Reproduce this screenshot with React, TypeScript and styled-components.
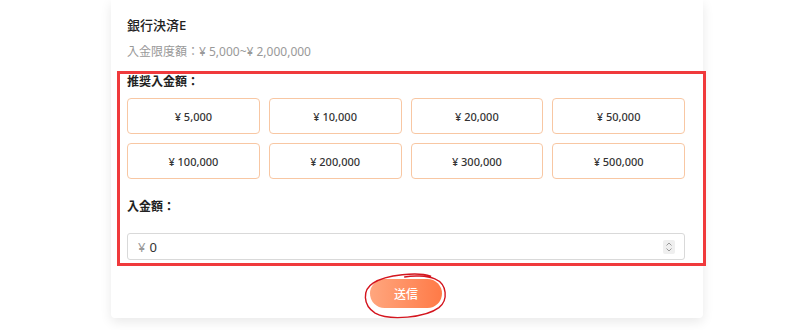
import React from "react";
import styled, { createGlobalStyle } from "styled-components";

const amounts = [5000, 10000, 20000, 50000, 100000, 200000, 300000, 500000];

const GlobalStyle = createGlobalStyle`
  html, body {
    margin: 0;
    padding: 0;
    background: #ffffff;
  }
  body {
    font-family: "Noto Sans", "Noto Sans CJK JP", sans-serif;
    color: #333;
  }
`;

const App: React.FC = () => {
  return (
    <>
      <GlobalStyle />
      <Page>
        <Card>
          <Title>銀行決済E</Title>
          <Limit>入金限度額：¥ 5,000~¥ 2,000,000</Limit>
          <Marked>
            <Label>推奨入金額：</Label>
            <Grid>
              {amounts.map((a) => (
                <AmountButton key={a}>¥ {a.toLocaleString("en-US")}</AmountButton>
              ))}
            </Grid>
            <InputLabel>入金額：</InputLabel>
            <InputBox>
              <Yen>¥</Yen>
              <Value>0</Value>
              <Spinner>
                <svg width="8" height="12" viewBox="0 0 8 12">
                  <path d="M1.5 4.5 L4 2 L6.5 4.5" fill="none" stroke="#999" strokeWidth="1" />
                  <path d="M1.5 7.5 L4 10 L6.5 7.5" fill="none" stroke="#999" strokeWidth="1" />
                </svg>
              </Spinner>
            </InputBox>
          </Marked>
          <Footer>
            <SubmitWrap>
              <Submit>送信</Submit>
              <Circle width="86" height="48" viewBox="0 0 86 48">
                <path
                  d="M70 6 C 58 1, 26 1, 12 9 C 1 15, 0 30, 12 39 C 26 48, 62 47, 76 38 C 86 31, 86 15, 74 9 C 66 5, 52 4, 44 5"
                  fill="none"
                  stroke="#d4161f"
                  strokeWidth="1.4"
                  strokeLinecap="round"
                />
              </Circle>
            </SubmitWrap>
          </Footer>
        </Card>
      </Page>
    </>
  );
};

export default App;

const Page = styled.div`
  width: 800px;
  height: 330px;
  overflow: hidden;
  padding-left: 111px;
  box-sizing: border-box;
`;

const Card = styled.div`
  width: 592px;
  box-sizing: border-box;
  background: #fff;
  padding: 15px 18px 10px 16px;
  box-shadow: 0 4px 12px rgba(0, 0, 0, 0.09);
  border-radius: 0 0 4px 4px;
`;

const Title = styled.div`
  font-size: 13px;
  line-height: 20px;
  color: #222;
  font-weight: 500;
`;

const Limit = styled.div`
  margin-top: 7px;
  font-size: 12px;
  line-height: 20px;
  color: #999;
`;

const Marked = styled.div`
  margin: 9px -21px 0 -10px;
  border: 3px solid #f03a3c;
  padding: 0 18px 3px 7px;
`;

const Label = styled.div`
  font-size: 12px;
  line-height: 16px;
  font-weight: 600;
  color: #222;
`;

const InputLabel = styled(Label)`
  margin-top: 20px;
`;

const Grid = styled.div`
  margin-top: 8px;
  display: grid;
  grid-template-columns: repeat(4, 1fr);
  grid-auto-rows: 36px;
  gap: 9px;
`;

const AmountButton = styled.div`
  display: flex;
  align-items: center;
  justify-content: center;
  border: 1px solid #f8c7a3;
  border-radius: 4px;
  background: #fff;
  font-size: 11px;
  font-weight: 500;
  color: #333;
`;

const InputBox = styled.div`
  margin-top: 18px;
  height: 27px;
  box-sizing: border-box;
  border: 1px solid #d9d9d9;
  border-radius: 3px;
  display: flex;
  align-items: center;
  padding: 0 9px 0 10px;
  font-size: 13px;
`;

const Yen = styled.span`
  color: #999;
`;

const Value = styled.span`
  margin-left: 4px;
  color: #333;
`;

const Spinner = styled.div`
  margin-left: auto;
  width: 12px;
  height: 14px;
  background: #efefef;
  border-radius: 2px;
  display: flex;
  align-items: center;
  justify-content: center;
`;

const Footer = styled.div`
  margin-top: 13px;
  display: flex;
  justify-content: center;
`;

const SubmitWrap = styled.div`
  position: relative;
`;

const Submit = styled.button`
  width: 72px;
  height: 29px;
  border: none;
  border-radius: 15px;
  background: linear-gradient(90deg, #ffa67e 0%, #ff7a47 100%);
  color: #fff;
  font-family: "Noto Sans", "Noto Sans CJK JP", sans-serif;
  font-size: 12px;
  font-weight: 500;
  padding: 0;
  display: block;
`;

const Circle = styled.svg`
  position: absolute;
  left: -8px;
  top: -7px;
  pointer-events: none;
  transform: rotate(-4deg);
`;
